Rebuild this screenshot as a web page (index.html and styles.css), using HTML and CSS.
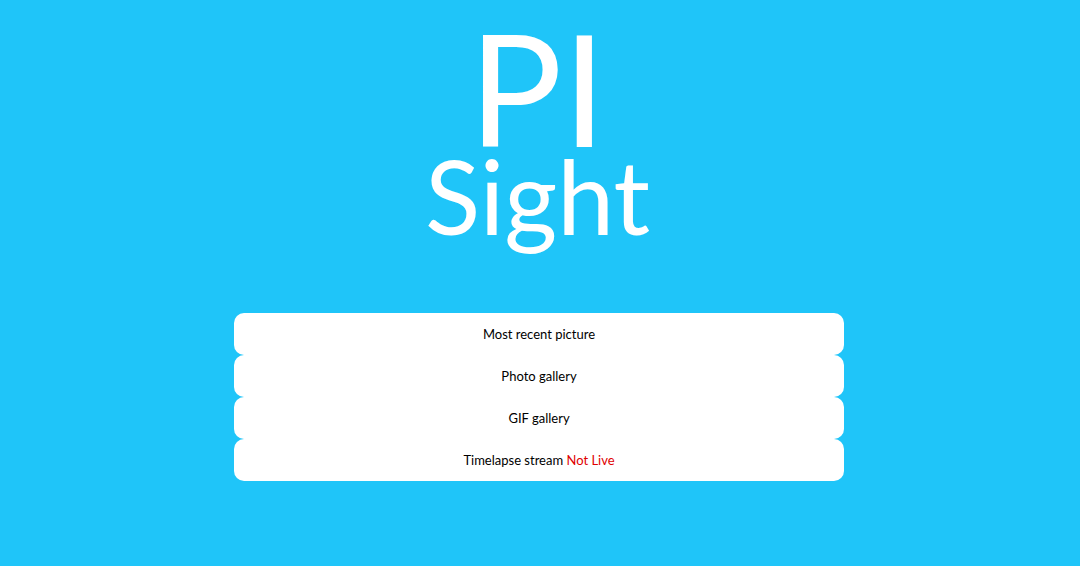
FILE: index.html
```html
<!DOCTYPE html>
<html>
<head>
<meta charset="utf-8">
<link rel="stylesheet" href="styles.css">
</head>
<body>
<header class="brand">
  <div class="brand-pi">PI</div>
  <div class="brand-sight">Sight</div>
</header>
<nav class="menu">
  <a class="menu-item" href="#">Most recent picture</a>
  <a class="menu-item" href="#">Photo gallery</a>
  <a class="menu-item" href="#">GIF gallery</a>
  <a class="menu-item" href="#">Timelapse stream <span class="status">Not Live</span></a>
</nav>
</body>
</html>
```
FILE: styles.css
```css
html, body {
  margin: 0;
  padding: 0;
  height: 100%;
}
body {
  background: #1fc5f9;
  font-family: Lato, "Open Sans", sans-serif;
  display: flex;
  flex-direction: column;
  align-items: center;
}
.brand {
  color: #fff;
  font-weight: 400;
  text-align: center;
  padding-right: 5px;
}
.brand-pi {
  font-size: 156px;
  line-height: 140px;
  margin-top: 17px;
}
.brand-sight {
  font-size: 102px;
  line-height: 80px;
  margin-top: -1px;
}
.menu {
  width: 610px;
  margin-top: 77px;
  margin-right: 2px;
  display: flex;
  flex-direction: column;
}
.menu-item {
  display: block;
  background: #fff;
  border-radius: 10px;
  height: 42px;
  line-height: 42px;
  text-align: center;
  color: #000;
  font-size: 13px;
  text-decoration: none;
}
.status {
  color: #e00000;
}
```
